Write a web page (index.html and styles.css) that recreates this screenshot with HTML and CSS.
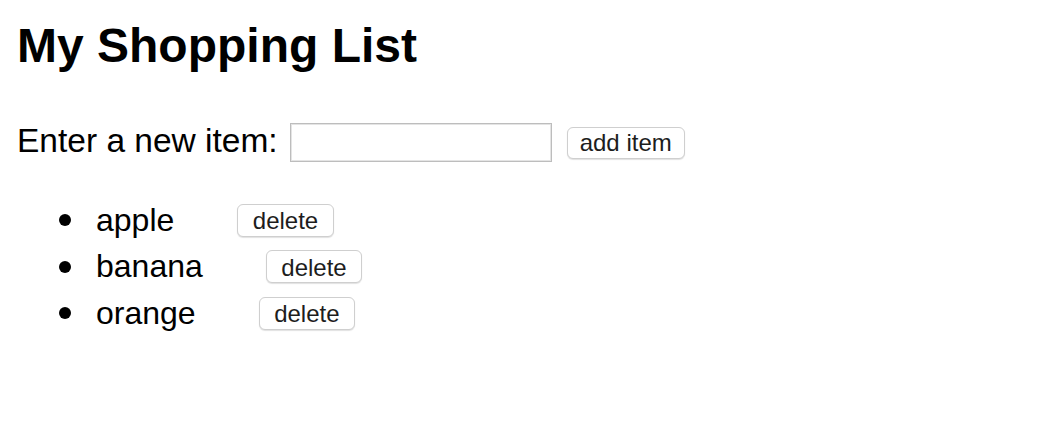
FILE: index.html
```html
<!DOCTYPE html>
<html lang="en">
<head>
  <meta charset="UTF-8">
  <title>My Shopping List</title>
  <link rel="stylesheet" href="styles.css">
</head>
<body>
  <h1>My Shopping List</h1>
  <div class="entry">
    <label for="item">Enter a new item:</label>
    <input type="text" id="item">
    <button class="add">add item</button>
  </div>
  <ul class="list">
    <li>apple <button>delete</button></li>
    <li>banana <button>delete</button></li>
    <li>orange <button>delete</button></li>
  </ul>
</body>
</html>
```

FILE: styles.css
```css
body {
  margin: 0;
  padding: 0 17px;
  font-family: "Liberation Sans", Arial, sans-serif;
  color: #000;
  background: #fff;
}
h1 {
  font-size: 48px;
  line-height: 54px;
  margin: 19px 0 0;
}
.entry {
  display: flex;
  align-items: center;
  height: 39px;
  margin-top: 50px;
  font-size: 33.5px;
}
.entry label {
  margin: -4px 12px 0 0;
}
.entry input {
  box-sizing: border-box;
  width: 262px;
  height: 39px;
  margin: 0 15px 0 0;
  border: 1px solid #bdbdbd;
  box-shadow: inset 0 0 0 1px #e4e4e4;
  font-size: 24px;
}
button {
  box-sizing: border-box;
  font-family: "Liberation Sans", Arial, sans-serif;
  font-size: 24px;
  color: #1d1d1d;
  background: #fff;
  border: 1px solid #cfcfcf;
  border-radius: 6px;
  box-shadow: 0 1px 1px rgba(0, 0, 0, 0.12);
}
button.add {
  height: 32px;
  padding: 0 12px;
}
.list {
  list-style: none;
  margin: 35px 0 0;
  padding-left: 42px;
}
.list li {
  display: flex;
  align-items: center;
  height: 46.5px;
  font-size: 32px;
}
.list li::before {
  content: "";
  width: 12px;
  height: 12px;
  border-radius: 50%;
  background: #000;
  margin-right: 25px;
}
.list button {
  height: 33px;
  margin-left: 63px;
  padding: 2px 14.5px 0;
}
```
